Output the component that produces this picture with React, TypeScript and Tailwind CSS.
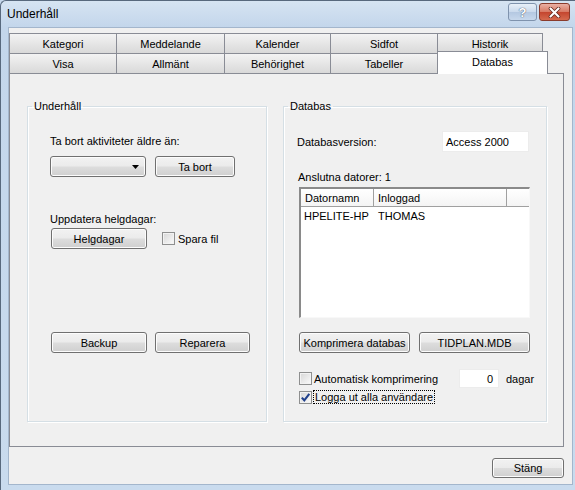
import type { ReactNode } from 'react'

function Button({ children, className = '' }: { children: ReactNode; className?: string }) {
  return (
    <div
      className={`flex shrink-0 items-center justify-center rounded-[3px] border border-[#707070] bg-[linear-gradient(to_bottom,#f2f2f2_0%,#ebebeb_48%,#dddddd_52%,#cfcfcf_100%)] shadow-[inset_0_0_0_1px_#fcfcfc] ${className}`}
    >
      {children}
    </div>
  )
}

function Checkbox({ checked = false }: { checked?: boolean }) {
  return (
    <span className="flex h-[13px] w-[13px] shrink-0 items-center justify-center border border-[#8e8f8f] bg-[linear-gradient(135deg,#d6d6d6,#fbfbfb)] shadow-[inset_0_0_0_1px_#f2f2f2]">
      {checked && (
        <svg width="11" height="11" viewBox="0 0 11 11">
          <path d="M1.8 5.6 L4.3 8.3 L9.3 1.8" fill="none" stroke="#21418c" strokeWidth="2.1" />
        </svg>
      )}
    </span>
  )
}

function Tab({ label, className = '' }: { label: string; className?: string }) {
  return (
    <div
      className={`-ml-px flex h-full shrink-0 items-center justify-center border border-b-0 border-[#898c95] bg-[linear-gradient(to_bottom,#f3f3f3,#e6e6e6_50%,#d9d9d9)] first:ml-0 ${className}`}
    >
      {label}
    </div>
  )
}

export default function App() {
  return (
    <div className="h-[490px] w-[575px] overflow-hidden bg-[#c6d8ec] font-['Liberation_Sans',Arial,sans-serif] text-[11px] leading-[14px] text-black">
      <div className="flex h-full flex-col rounded-tl-[6px] border-l border-t border-[#58697d] bg-[linear-gradient(to_bottom,#d6e4f2,#c3d6eb_26px,#c9dbee)]">
        {/* Title bar */}
        <div className="flex h-[26px] shrink-0 pl-[6px] pr-[5px]">
          <span className="self-center pb-[1px] text-[12px]">Underhåll</span>
          <div className="ml-auto mt-[2px] flex gap-[2px]">
            <div className="flex h-[18px] w-[29px] items-center justify-center rounded-[3px] border border-[#7f93ad] bg-[linear-gradient(to_bottom,#e8f0f8,#c9d9ec_50%,#b4c8e1_51%,#c7d8ec)] text-[13px] font-bold leading-none text-white [text-shadow:0_0_1px_#4a5a70,0_0_1px_#4a5a70]">
              ?
            </div>
            <div className="flex h-[18px] w-[31px] items-center justify-center rounded-[3px] border border-[#8a3b2c] bg-[linear-gradient(to_bottom,#eab0a4,#d77862_50%,#c4452e_51%,#d56a4e)]">
              <svg width="13" height="11" viewBox="0 0 13 11">
                <path d="M2.5 1.5 L10.5 9.5 M10.5 1.5 L2.5 9.5" stroke="#5b2016" strokeWidth="3.6" strokeLinecap="round" />
                <path d="M2.5 1.5 L10.5 9.5 M10.5 1.5 L2.5 9.5" stroke="#ffffff" strokeWidth="2.2" strokeLinecap="round" />
              </svg>
            </div>
          </div>
        </div>

        {/* Client area */}
        <div className="ml-[7px] mr-[2px] flex h-[458px] shrink-0 flex-col border border-[#a3b6cc] bg-[#f0f0f0]">
          <div className="mt-[5px] flex w-[555px] flex-col">
            {/* Tabs */}
            <div className="flex h-[20px]">
              <Tab label="Kategori" className="w-[108px]" />
              <Tab label="Meddelande" className="w-[109px]" />
              <Tab label="Kalender" className="w-[107px]" />
              <Tab label="Sidfot" className="w-[108px]" />
              <Tab label="Historik" className="w-[106px]" />
            </div>
            <div className="flex h-[20px] items-end">
              <Tab label="Visa" className="w-[108px]" />
              <Tab label="Allmänt" className="w-[109px]" />
              <Tab label="Behörighet" className="w-[107px]" />
              <Tab label="Tabeller" className="w-[108px]" />
              <div className="relative z-10 -mb-px -ml-px flex h-[23px] w-[111px] shrink-0 items-start justify-center border border-b-0 border-[#898c95] bg-white pt-[3px]">
                Databas
              </div>
            </div>

            {/* Tab page */}
            <div className="flex h-[374px] border border-[#898c95] bg-[#f0f0f0] pl-[17px] pt-[25px]">
              {/* Underhåll */}
              <fieldset className="flex h-[323px] w-[240px] flex-col border border-[#d5dfe5] shadow-[inset_1px_1px_0_#fff,1px_1px_0_#fff]">
                <legend className="ml-[4px] px-[2px]">Underhåll</legend>
                <p className="mt-[21px] pl-[22px]">Ta bort aktiviteter äldre än:</p>
                <div className="mt-[8px] flex pl-[22px]">
                  <Button className="h-[21px] w-[96px] justify-end pr-[6px]">
                    <svg width="7" height="4" viewBox="0 0 7 4">
                      <path d="M0 0 H7 L3.5 4 Z" fill="#000" />
                    </svg>
                  </Button>
                  <Button className="ml-[9px] h-[21px] w-[80px]">Ta bort</Button>
                </div>
                <p className="mt-[35px] pl-[22px]">Uppdatera helgdagar:</p>
                <div className="mt-[2px] flex items-center pl-[23px]">
                  <Button className="h-[21px] w-[96px]">Helgdagar</Button>
                  <label className="ml-[15px] flex items-center gap-[3px]">
                    <Checkbox />
                    Spara fil
                  </label>
                </div>
                <div className="mt-[83px] flex pl-[23px]">
                  <Button className="h-[21px] w-[96px]">Backup</Button>
                  <Button className="ml-[8px] h-[21px] w-[95px]">Reparera</Button>
                </div>
              </fieldset>

              {/* Databas */}
              <fieldset className="ml-[16px] flex h-[323px] w-[264px] flex-col border border-[#d5dfe5] shadow-[inset_1px_1px_0_#fff,1px_1px_0_#fff]">
                <legend className="ml-[4px] px-[2px]">Databas</legend>
                <div className="mt-[18px] flex h-[21px] items-center justify-between pl-[13px] pr-[17px]">
                  <span>Databasversion:</span>
                  <div className="flex h-[21px] w-[87px] items-center border border-[#ececec] bg-white pl-[3px]">
                    Access 2000
                  </div>
                </div>
                <p className="mt-[18px] pl-[14px]">Anslutna datorer: 1</p>
                <div className="ml-[15px] mt-[3px] flex h-[131px] w-[231px] flex-col border-l-2 border-t-2 border-b border-r border-l-[#8a8a8a] border-t-[#8a8a8a] border-b-[#f8f8f8] border-r-[#f8f8f8] bg-white">
                  <div className="flex h-[18px] shrink-0 border-b border-[#a0a0a0] bg-[linear-gradient(to_bottom,#ffffff,#f4f4f4)]">
                    <div className="flex w-[73px] items-center border-r border-[#a0a0a0] pl-[4px]">Datornamn</div>
                    <div className="flex w-[133px] items-center border-r border-[#a0a0a0] pl-[4px]">Inloggad</div>
                    <div className="flex-1" />
                  </div>
                  <div className="mt-[2px] flex">
                    <span className="w-[73px] pl-[3px]">HPELITE-HP</span>
                    <span className="pl-[4px]">THOMAS</span>
                  </div>
                </div>
                <div className="ml-[15px] mt-[14px] flex">
                  <Button className="h-[21px] w-[111px]">Komprimera databas</Button>
                  <Button className="ml-[9px] h-[21px] w-[111px]">TIDPLAN.MDB</Button>
                </div>
                <div className="ml-[15px] mt-[16px] flex h-[19px] items-center">
                  <label className="flex w-[160px] items-center gap-[2px]">
                    <Checkbox />
                    Automatisk komprimering
                  </label>
                  <div className="flex h-[19px] w-[40px] items-center justify-end border border-[#ececec] bg-white pr-[5px]">
                    0
                  </div>
                  <span className="ml-[7px]">dagar</span>
                </div>
                <div className="ml-[15px] mt-[2px] flex h-[14px] items-center">
                  <Checkbox checked />
                  <span className="ml-[1px] border border-dotted border-black px-[1px] leading-[12px]">
                    Logga ut alla användare
                  </span>
                </div>
              </fieldset>
            </div>
          </div>

          <div className="mt-[11px] flex w-[555px] justify-end">
            <Button className="h-[20px] w-[72px]">Stäng</Button>
          </div>
        </div>
      </div>
    </div>
  )
}
